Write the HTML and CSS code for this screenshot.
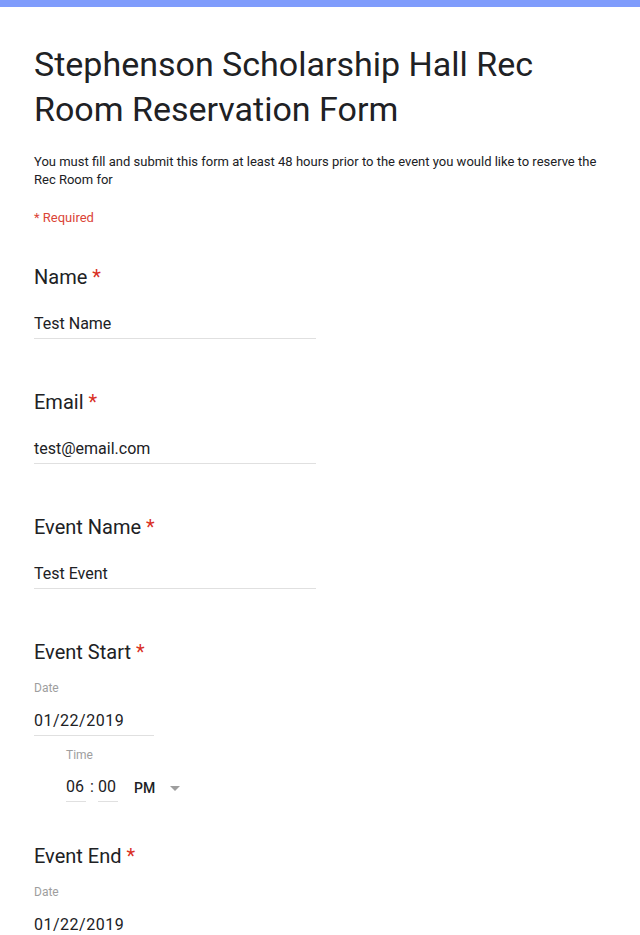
FILE: index.html
```html
<!DOCTYPE html>
<html>
<head>
<meta charset="utf-8">
<link rel="stylesheet" href="styles.css">
</head>
<body>
<div class="topbar"></div>
<div class="form">
  <h1 class="title">Stephenson Scholarship Hall Rec Room Reservation Form</h1>
  <div class="desc">You must fill and submit this form at least 48 hours prior to the event you would like to reserve the Rec Room for</div>
  <div class="required">* Required</div>

  <div class="question">
    <div class="qtitle">Name <span class="ast">*</span></div>
    <div class="field text">Test Name</div>
  </div>

  <div class="question">
    <div class="qtitle">Email <span class="ast">*</span></div>
    <div class="field text">test@email.com</div>
  </div>

  <div class="question">
    <div class="qtitle">Event Name <span class="ast">*</span></div>
    <div class="field text">Test Event</div>
  </div>

  <div class="question">
    <div class="qtitle">Event Start <span class="ast">*</span></div>
    <div class="sublabel">Date</div>
    <div class="field date">01/22/2019</div>
    <div class="time">
      <div class="sublabel time-label">Time</div>
      <div class="time-row">
        <div class="field tnum">06</div>
        <div class="colon">:</div>
        <div class="field tnum">00</div>
        <div class="ampm">PM</div>
        <div class="caret"></div>
      </div>
    </div>
  </div>

  <div class="question end">
    <div class="qtitle">Event End <span class="ast">*</span></div>
    <div class="sublabel">Date</div>
    <div class="field date">01/22/2019</div>
  </div>
</div>
</body>
</html>
```
FILE: styles.css
```css
html, body {
  margin: 0;
  padding: 0;
  background: #ffffff;
  font-family: Roboto, "Liberation Sans", sans-serif;
  color: #202124;
}
.topbar {
  height: 7px;
  background: #7f9cfc;
}
.form {
  padding: 0 34px;
}
.title {
  margin: 35px 0 0;
  font-size: 34px;
  font-weight: 400;
  line-height: 45px;
  color: #202124;
  max-width: 540px;
}
.desc {
  margin-top: 21px;
  font-size: 13px;
  line-height: 18px;
  color: #202124;
}
.required {
  margin-top: 20px;
  font-size: 13px;
  line-height: 18px;
  color: #db4437;
}
.question {
  margin-top: 38px;
}
.question + .question {
  margin-top: 51px;
}
.question.end {
  margin-top: 42px;
}
.qtitle {
  font-size: 20px;
  line-height: 24px;
  color: #202124;
}
.ast {
  color: #d93025;
}
.field {
  font-size: 16px;
  line-height: 24px;
  padding-bottom: 2px;
  border-bottom: 1px solid #e0e0e0;
  color: #202124;
}
.field.text {
  margin-top: 23px;
  width: 282px;
}
.sublabel {
  margin-top: 16px;
  font-size: 12px;
  line-height: 16px;
  color: #9e9e9e;
}
.field.date {
  margin-top: 13px;
  width: 120px;
  letter-spacing: 0.5px;
}
.time {
  padding-left: 32px;
}
.time-label {
  margin-top: 11px;
}
.time-row {
  margin-top: 12px;
  display: flex;
  align-items: flex-start;
}
.field.tnum {
  width: 20px;
}
.colon {
  width: 12px;
  text-align: center;
  font-size: 16px;
  line-height: 24px;
}
.ampm {
  margin-left: 16px;
  font-size: 14px;
  font-weight: 500;
  line-height: 26px;
  color: #202124;
}
.caret {
  margin-left: 15px;
  margin-top: 11px;
  width: 0;
  height: 0;
  border-left: 5px solid transparent;
  border-right: 5px solid transparent;
  border-top: 5px solid #9e9e9e;
}
```
